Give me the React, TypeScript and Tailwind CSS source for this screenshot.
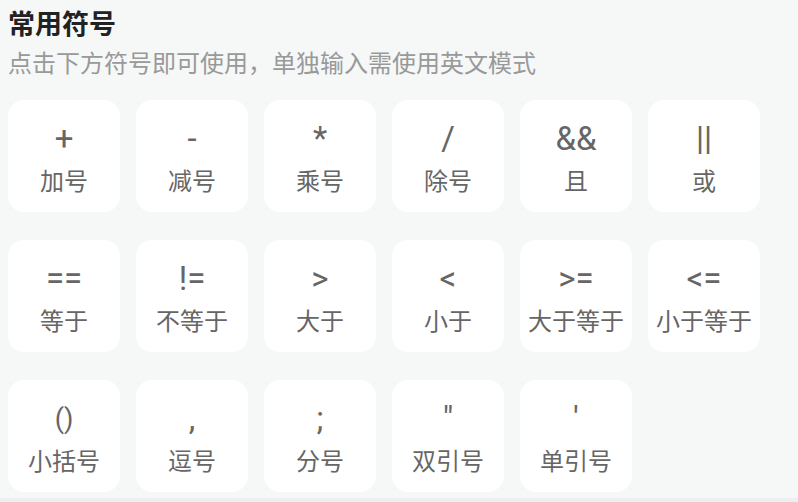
import React from "react";

type Item = { s: string; l: string; small?: boolean };

const rows: Item[][] = [
  [
    { s: "+", l: "加号" },
    { s: "-", l: "减号" },
    { s: "*", l: "乘号" },
    { s: "/", l: "除号" },
    { s: "&&", l: "且" },
    { s: "||", l: "或" },
  ],
  [
    { s: "==", l: "等于" },
    { s: "!=", l: "不等于" },
    { s: ">", l: "大于" },
    { s: "<", l: "小于" },
    { s: ">=", l: "大于等于" },
    { s: "<=", l: "小于等于" },
  ],
  [
    { s: "()", l: "小括号", small: true },
    { s: ",", l: "逗号" },
    { s: ";", l: "分号" },
    { s: '"', l: "双引号" },
    { s: "'", l: "单引号" },
  ],
];

const font = { fontFamily: 'Roboto, "Noto Sans CJK SC", sans-serif' };

export default function App() {
  return (
    <div className="w-[798px] h-[502px] bg-[#eeeeee]" style={font}>
      <div className="h-[498px] bg-[#f6f7f7] px-2 pt-[7px]">
        <div className="text-[27px] leading-[36px] font-bold text-[#222222]">常用符号</div>
        <div className="text-[24px] leading-[34px] text-[#999999] mt-[4px]">
          点击下方符号即可使用，单独输入需使用英文模式
        </div>
        <div className="mt-[19px] flex flex-col gap-[28px]">
          {rows.map((row, i) => (
            <div key={i} className="flex gap-4">
              {row.map((it) => (
                <div
                  key={it.l}
                  className="w-[112px] h-[112px] rounded-2xl bg-white flex flex-col items-center pt-[19px]"
                >
                  <div
                    className={
                      it.small
                        ? "h-[40px] leading-[40px] text-[27px] text-[#666666]"
                        : "h-[40px] leading-[40px] text-[33px] text-[#666666]"
                    }
                  >
                    {it.s}
                  </div>
                  <div className="mt-[7px] h-[32px] leading-[32px] text-[24px] text-[#666666]">{it.l}</div>
                </div>
              ))}
            </div>
          ))}
        </div>
      </div>
    </div>
  );
}
